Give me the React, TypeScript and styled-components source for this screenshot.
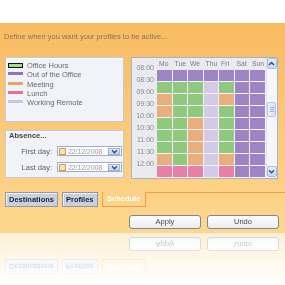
import React from "react";
import styled, { createGlobalStyle } from "styled-components";

const GlobalStyle = createGlobalStyle`
  html, body { margin: 0; padding: 0; background: #fff; }
  body {
    width: 285px; height: 285px; overflow: hidden;
    font-family: "Liberation Sans", Arial, sans-serif;
  }
`;

const Page = styled.div`
  padding-top: 23px;
`;

const Panel = styled.div`
  height: 210px;
  box-sizing: border-box;
  padding-top: 9px;
  background: linear-gradient(to bottom, #f8bb62 0%, #fbc97b 50%, #fdd78e 100%);
  display: flex;
  flex-direction: column;
  -webkit-box-reflect: below 0px linear-gradient(to bottom, transparent 76%, rgba(255, 255, 255, 0.38) 100%);
`;

const Title = styled.div`
  font-size: 7.5px;
  line-height: 10px;
  color: #8c7457;
  padding-left: 4px;
`;

const Content = styled.div`
  display: flex;
  gap: 7px;
  padding-left: 5px;
  margin-top: 15px;
`;

const LeftColumn = styled.div`
  width: 119px;
  display: flex;
  flex-direction: column;
  gap: 8px;
`;

const Box = styled.div<{ $h: number }>`
  height: ${(p) => p.$h}px;
  box-sizing: border-box;
  background: #f1f3f8;
  border: 1px solid #c3c8d4;
  box-shadow: inset 1px 1px 0 #fff;
`;

const Legend = styled(Box)`
  padding: 3px 0 0 2px;
`;

const LegendRow = styled.div`
  height: 9.3px;
  display: flex;
  align-items: center;
`;

const Swatch = styled.span<{ $color: string; $outlined?: boolean }>`
  width: 15px;
  height: ${(p) => (p.$outlined ? 5 : 3)}px;
  box-sizing: border-box;
  background: ${(p) => p.$color};
  border: ${(p) => (p.$outlined ? "1px solid #111" : "none")};
  margin-bottom: ${(p) => (p.$outlined ? 1 : 2)}px;
  flex-shrink: 0;
`;

const LegendText = styled.span`
  margin-left: 4px;
  font-size: 7.5px;
  line-height: 9px;
  color: #6a6a6a;
`;

const Absence = styled(Box)`
  padding: 0 0 0 2px;
`;

const AbsenceTitle = styled.div`
  font-size: 7.5px;
  line-height: 10px;
  font-weight: bold;
  color: #444;
  padding-left: 1px;
`;

const DateRow = styled.div<{ $mt: number }>`
  display: flex;
  align-items: center;
  margin-top: ${(p) => p.$mt}px;
  height: 10px;
`;

const DateLabel = styled.span`
  width: 44px;
  text-align: right;
  font-size: 7.5px;
  color: #5c5c5c;
`;

const DateField = styled.div`
  margin-left: 5px;
  width: 65px;
  height: 10px;
  box-sizing: border-box;
  background: #fff;
  border: 1px solid #a2adc0;
  display: flex;
  align-items: center;
`;

const Check = styled.span`
  width: 7px;
  height: 7px;
  box-sizing: border-box;
  margin-left: 1px;
  border: 1px solid #cf9e55;
  background: #f7e0b2;
`;

const DateText = styled.span`
  margin-left: 2px;
  font-size: 7px;
  color: #9b9b9b;
  letter-spacing: -0.1px;
`;

const DropButton = styled.span`
  margin-left: auto;
  margin-right: 1px;
  width: 12px;
  height: 7px;
  box-sizing: border-box;
  background: linear-gradient(#e3ecfa, #c3d3ee);
  border: 1px solid #9fb3d6;
  display: flex;
  align-items: center;
  justify-content: center;
`;

const SchedulePanel = styled.div`
  width: 147px;
  height: 122px;
  box-sizing: border-box;
  border: 1px solid #a9b3c5;
  background: #e9ebf1;
  display: flex;
`;

const Grid = styled.div`
  display: grid;
  grid-template-columns: 25px repeat(7, 15.5px);
  grid-auto-rows: 12px;
`;

const DayHead = styled.div`
  font-size: 6.8px;
  line-height: 12px;
  color: #7a7a7a;
  padding-left: 2px;
  white-space: nowrap;
`;

const TimeLabel = styled.div`
  font-size: 7px;
  line-height: 8px;
  height: 8px;
  margin-top: -6px;
  text-align: right;
  padding-right: 3px;
  color: #8a8a8a;
`;

const Cell = styled.div<{ $color: string }>`
  background: ${(p) => p.$color};
  border-right: 1px solid #f6f4fa;
  border-bottom: 1px solid #f6f4fa;
  box-sizing: border-box;
`;

const Scrollbar = styled.div`
  flex: 1;
  background: #f5f6f9;
  border-left: 1px solid #dfe2ea;
  display: flex;
  flex-direction: column;
  align-items: center;
`;

const ScrollButton = styled.div<{ $bottom?: boolean }>`
  width: 10px;
  height: 11px;
  box-sizing: border-box;
  margin-top: ${(p) => (p.$bottom ? "auto" : "0")};
  margin-bottom: ${(p) => (p.$bottom ? "1px" : "0")};
  background: linear-gradient(#e6eefb, #c8d7ef);
  border: 1px solid #a9bcdc;
  border-radius: 2px;
  display: flex;
  align-items: center;
  justify-content: center;
`;

const Thumb = styled.div`
  margin-top: 33px;
  width: 9px;
  height: 15px;
  box-sizing: border-box;
  background: linear-gradient(to right, #eef3fb, #d6e1f3);
  border: 1px solid #b7c7e2;
  border-radius: 2px;
  display: flex;
  flex-direction: column;
  align-items: center;
  justify-content: center;
  gap: 1px;
`;

const Grip = styled.span`
  width: 4px;
  height: 1px;
  background: #9fb2d3;
`;

const TabStrip = styled.div`
  display: flex;
  align-items: flex-start;
  margin-top: 13px;
  padding-left: 5px;
  height: 15px;
`;

const Tab = styled.div<{ $active?: boolean }>`
  height: 15px;
  box-sizing: border-box;
  padding: 0 ${(p) => (p.$active ? 4.5 : 3)}px;
  margin-right: ${(p) => (p.$active ? 0 : 4)}px;
  font-size: 7.5px;
  font-weight: bold;
  line-height: 13px;
  color: ${(p) => (p.$active ? "#fff" : "#1e2333")};
  background: ${(p) => (p.$active ? "transparent" : "#c8d0dd")};
  border: 1px solid ${(p) => (p.$active ? "#e2a24f" : "#8f99ab")};
  border-top: ${(p) => (p.$active ? "none" : "1px solid #8f99ab")};
  box-shadow: ${(p) => (p.$active ? "none" : "inset 1px 1px 0 #eef2f8")};
`;

const TabFiller = styled.div`
  flex: 1;
  border-top: 1px solid #e2a24f;
`;

const ButtonRow = styled.div`
  display: flex;
  justify-content: flex-end;
  gap: 6px;
  padding-right: 6px;
  margin-top: 8px;
`;

const Button = styled.button`
  width: 72px;
  height: 14px;
  padding: 0;
  box-sizing: border-box;
  border: 1px solid #808896;
  border-radius: 3px;
  background: linear-gradient(#ffffff, #e9ebf0);
  font-family: "Liberation Sans", Arial, sans-serif;
  font-size: 7.5px;
  color: #4a4a4a;
  line-height: 12px;
`;

const Chevron = ({ up }: { up?: boolean }) => (
  <svg width="7" height="5" viewBox="0 0 7 5">
    <path
      d={up ? "M1 4 L3.5 1.5 L6 4" : "M1 1.2 L3.5 3.7 L6 1.2"}
      fill="none"
      stroke="#2b4c8c"
      strokeWidth="1.4"
    />
  </svg>
);

const COLORS: Record<string, string> = {
  P: "#9c84c5",
  G: "#8ec97d",
  O: "#eaae7d",
  L: "#d3cae8",
  K: "#e780a4",
};

const DAYS = ["Mo", "Tue", "We", "Thu", "Fri", "Sat", "Sun"];
const ROWS: [string, string][] = [
  ["08:00", "PPPPPPP"],
  ["08:30", "GGGLGPP"],
  ["09:00", "OGGLOPP"],
  ["09:30", "OGGLGPP"],
  ["10:00", "GGOLGPP"],
  ["10:30", "GGOLGPP"],
  ["11:00", "GGOLGPP"],
  ["11:30", "OGOLOPP"],
  ["12:00", "KKKLKPP"],
];

const LEGEND = [
  { label: "Office Hours", color: "#a3dc8e", outlined: true },
  { label: "Out of the Office", color: "#8e74bb" },
  { label: "Meeting", color: "#e8a664" },
  { label: "Lunch", color: "#e2719a" },
  { label: "Working Remote", color: "#ccc5e3" },
];

export default function App() {
  return (
    <>
      <GlobalStyle />
      <Page>
        <Panel>
          <Title>Define when you want your profiles to be active...</Title>
          <Content>
            <LeftColumn>
              <Legend $h={65}>
                {LEGEND.map((l) => (
                  <LegendRow key={l.label}>
                    <Swatch $color={l.color} $outlined={l.outlined} />
                    <LegendText>{l.label}</LegendText>
                  </LegendRow>
                ))}
              </Legend>
              <Absence $h={48}>
                <AbsenceTitle>Absence...</AbsenceTitle>
                {[
                  ["First day:", 5],
                  ["Last day:", 6],
                ].map(([label, mt]) => (
                  <DateRow key={label as string} $mt={mt as number}>
                    <DateLabel>{label}</DateLabel>
                    <DateField>
                      <Check />
                      <DateText>22/12/2008</DateText>
                      <DropButton>
                        <Chevron />
                      </DropButton>
                    </DateField>
                  </DateRow>
                ))}
              </Absence>
            </LeftColumn>
            <SchedulePanel>
              <Grid>
                <div />
                {DAYS.map((d) => (
                  <DayHead key={d}>{d}</DayHead>
                ))}
                {ROWS.map(([time, cells]) => (
                  <React.Fragment key={time}>
                    <TimeLabel>{time}</TimeLabel>
                    {cells.split("").map((c, i) => (
                      <Cell key={i} $color={COLORS[c]} />
                    ))}
                  </React.Fragment>
                ))}
              </Grid>
              <Scrollbar>
                <ScrollButton>
                  <Chevron up />
                </ScrollButton>
                <Thumb>
                  <Grip />
                  <Grip />
                  <Grip />
                </Thumb>
                <ScrollButton $bottom>
                  <Chevron />
                </ScrollButton>
              </Scrollbar>
            </SchedulePanel>
          </Content>
          <TabStrip>
            <Tab>Destinations</Tab>
            <Tab>Profiles</Tab>
            <Tab $active>Schedule</Tab>
            <TabFiller />
          </TabStrip>
          <ButtonRow>
            <Button>Apply</Button>
            <Button>Undo</Button>
          </ButtonRow>
        </Panel>
      </Page>
    </>
  );
}
